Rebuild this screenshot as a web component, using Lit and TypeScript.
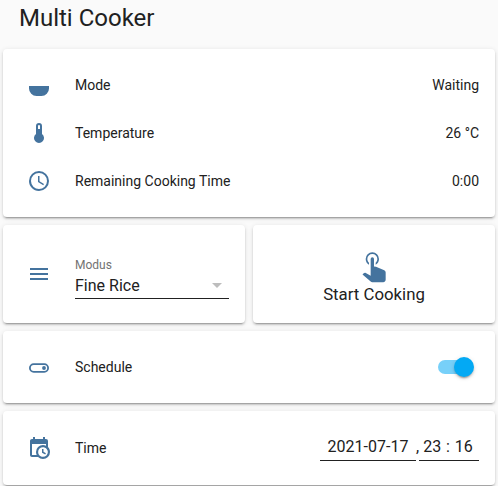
import { LitElement, html, css, svg } from "lit";
import { customElement } from "lit/decorators.js";

const P = {
  bowl: "M2 13H22V15.5A7.5 7.5 0 0 1 14.5 23H9.5A7.5 7.5 0 0 1 2 15.5Z",
  therm: "M15 13V5A3 3 0 0 0 9 5V13A5 5 0 1 0 15 13M12 4A1 1 0 0 1 13 5V8H11V5A1 1 0 0 1 12 4Z",
  clock: "M12,20A8,8 0 0,0 20,12A8,8 0 0,0 12,4A8,8 0 0,0 4,12A8,8 0 0,0 12,20M12,2A10,10 0 0,1 22,12A10,10 0 0,1 12,22C6.47,22 2,17.5 2,12A10,10 0 0,1 12,2M12.5,7V12.25L17,14.92L16.25,16.15L11,13V7H12.5Z",
  menu: "M3,6H21V8H3V6M3,11H21V13H3V11M3,16H21V18H3V16Z",
  toggle: "M6.7 8.3H17.3A4.7 4.7 0 0 1 17.3 17.7H6.7A4.7 4.7 0 0 1 6.7 8.3ZM6.7 10.1A2.9 2.9 0 0 0 6.7 15.9H17.3A2.9 2.9 0 0 0 17.3 10.1H6.7ZM17 11.1A1.9 1.9 0 0 1 17 14.9A1.9 1.9 0 0 1 17 11.1Z",
  cal: "M15,13H16.5V15.82L18.94,17.23L18.19,18.53L15,16.69V13M19,8H5V19H9.67C9.24,18.09 9,17.07 9,16A7,7 0 0,1 16,9C17.07,9 18.09,9.24 19,9.67V8M5,21C3.89,21 3,20.1 3,19V5C3,3.89 3.89,3 5,3H6V1H8V3H16V1H18V3H19A2,2 0 0,1 21,5V11.1C22.24,12.36 23,14.09 23,16A7,7 0 0,1 16,23C14.09,23 12.36,22.24 11.1,21H5M16,11.15A4.85,4.85 0 0,0 11.15,16C11.15,18.68 13.32,20.85 16,20.85A4.85,4.85 0 0,0 20.85,16C20.85,13.32 18.68,11.15 16,11.15Z",
  tap: "M10,9A1,1 0 0,1 11,8A1,1 0 0,1 12,9V13.47L13.21,13.6L18.15,15.79C18.68,16.03 19,16.56 19,17.14V21.5C18.97,22.32 18.32,22.97 17.5,23H11C10.62,23 10.26,22.85 10,22.57L5.1,18.37L5.84,17.6C6.03,17.39 6.3,17.28 6.59,17.28H6.8L10,19V9M11,5A4,4 0 0,1 15,9C15,10.5 14.2,11.77 13,12.46V11.24C13.61,10.69 14,9.89 14,9A3,3 0 0,0 11,6A3,3 0 0,0 8,9C8,9.89 8.39,10.69 9,11.24V12.46C7.8,11.77 7,10.5 7,9A4,4 0 0,1 11,5Z",
};

const icon = (d: string, cls = "icon") =>
  html`<svg class=${cls} viewBox="0 0 24 24">${svg`<path d=${d}></path>`}</svg>`;

@customElement("app-root")
export class AppRoot extends LitElement {
  static styles = css`
    :host {
      display: block;
      width: 498px;
      height: 486px;
      overflow: hidden;
      background: #fafafa;
      color: #212121;
      font-family: Roboto, "Liberation Sans", sans-serif;
      font-size: 14px;
    }
    .page {
      display: flex;
      flex-direction: column;
      gap: 8px;
      padding: 0 3px;
    }
    h1 {
      margin: 0;
      padding: 4px 16px 0;
      height: 41px;
      box-sizing: border-box;
      font-size: 24px;
      font-weight: 400;
      line-height: 28px;
    }
    .card {
      background: #fff;
      border-radius: 4px;
      box-shadow: 0 2px 2px 0 rgba(0, 0, 0, 0.14), 0 1px 5px 0 rgba(0, 0, 0, 0.12),
        0 3px 1px -2px rgba(0, 0, 0, 0.2);
      box-sizing: border-box;
    }
    .pad {
      padding: 16px;
      display: flex;
      flex-direction: column;
      gap: 8px;
    }
    .row {
      display: flex;
      align-items: center;
      height: 40px;
    }
    .slot {
      width: 40px;
      margin-right: 16px;
      display: flex;
      justify-content: center;
      flex: none;
    }
    .icon {
      width: 24px;
      height: 24px;
      fill: #44739e;
      display: block;
    }
    .name {
      flex: 1;
    }
    .pair {
      display: grid;
      grid-template-columns: 1fr 1fr;
      gap: 8px;
    }
    .select {
      flex: 1;
      height: 50px;
      display: flex;
      flex-direction: column;
      border-bottom: 1px solid #212121;
      box-sizing: border-box;
      position: relative;
    }
    .modus-row {
      height: 66px;
    }
    .label {
      font-size: 12px;
      line-height: 14px;
      color: #737373;
      margin-top: 9px;
    }
    .val {
      font-size: 16px;
      line-height: 20px;
      margin-top: 4px;
    }
    .arrow {
      position: absolute;
      right: 7px;
      top: 34px;
      width: 0;
      height: 0;
      border-left: 5px solid transparent;
      border-right: 5px solid transparent;
      border-top: 5px solid #bdbdbd;
    }
    .button {
      height: 98px;
      display: flex;
      flex-direction: column;
      align-items: center;
      padding-top: 19px;
    }
    .tap {
      width: 40px;
      height: 40px;
      fill: #44739e;
      display: block;
    }
    .btn-label {
      font-size: 16.8px;
      line-height: 20px;
    }
    .switch {
      position: relative;
      width: 32px;
      height: 14px;
      margin-right: 9px;
      border-radius: 7px;
      background: rgba(3, 169, 244, 0.54);
    }
    .thumb {
      position: absolute;
      right: -4px;
      top: -3px;
      width: 20px;
      height: 20px;
      border-radius: 50%;
      background: #03a9f4;
      box-shadow: 0 3px 1px -2px rgba(0, 0, 0, 0.2), 0 2px 2px 0 rgba(0, 0, 0, 0.14),
        0 1px 5px 0 rgba(0, 0, 0, 0.12);
    }
    .time-card {
      height: 74px;
    }
    .time-row {
      height: 42px;
    }
    .fields {
      display: flex;
      margin-bottom: 4px;
    }
    .field {
      height: 30px;
      box-sizing: border-box;
      border-bottom: 1px solid #212121;
      font-size: 16px;
      line-height: 31px;
      text-align: center;
    }
    .date {
      width: 96px;
    }
    .comma {
      width: 3px;
      font-size: 16px;
      line-height: 31px;
      height: 30px;
    }
    .time {
      width: 60px;
      white-space: pre;
      word-spacing: 0.8px;
      padding-right: 2px;
    }
  `;

  render() {
    return html`
      <div class="page">
        <h1>Multi Cooker</h1>
        <div class="card pad">
          <div class="row"><div class="slot">${icon(P.bowl)}</div><div class="name">Mode</div><div>Waiting</div></div>
          <div class="row"><div class="slot">${icon(P.therm)}</div><div class="name">Temperature</div><div>26 °C</div></div>
          <div class="row"><div class="slot">${icon(P.clock)}</div><div class="name">Remaining Cooking Time</div><div>0:00</div></div>
        </div>
        <div class="pair">
          <div class="card pad">
            <div class="row modus-row">
              <div class="slot">${icon(P.menu)}</div>
              <div class="select">
                <div class="label">Modus</div>
                <div class="val">Fine Rice</div>
                <div class="arrow"></div>
              </div>
            </div>
          </div>
          <div class="card button">
            ${icon(P.tap, "tap")}
            <div class="btn-label">Start Cooking</div>
          </div>
        </div>
        <div class="card pad">
          <div class="row">
            <div class="slot">${icon(P.toggle)}</div>
            <div class="name">Schedule</div>
            <div class="switch"><div class="thumb"></div></div>
          </div>
        </div>
        <div class="card pad time-card">
          <div class="row time-row">
            <div class="slot">${icon(P.cal)}</div>
            <div class="name">Time</div>
            <div class="fields">
              <div class="field date">2021-07-17</div>
              <div class="comma">,</div>
              <div class="field time">23 : 16</div>
            </div>
          </div>
        </div>
      </div>
    `;
  }
}
